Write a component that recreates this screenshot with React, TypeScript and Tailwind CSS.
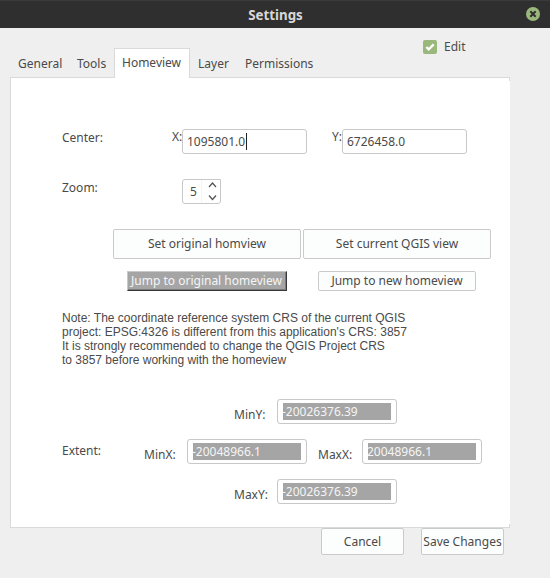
import type { ReactNode } from "react";

function Field({ value, caret = false }: { value: string; caret?: boolean }) {
  return (
    <div className="flex h-[25px] w-[125px] items-start rounded-[3px] border border-[#c8c8c8] bg-white pt-[3px] pl-1">
      <span className="whitespace-pre">{value}</span>
      {caret && <span className="ml-px h-[17px] w-px bg-[#202020]" />}
    </div>
  );
}

function ExtentField({ value }: { value: string }) {
  return (
    <div className="h-[25px] w-[120px] shrink-0 rounded-[3px] border border-[#c8c8c8] bg-white px-[5px] pt-[3px]">
      <div className="h-[17px] overflow-hidden bg-[#a5a5a5] text-[#f5f5f5]">
        <span className="-ml-px block">{value}</span>
      </div>
    </div>
  );
}

function Button({ children, className }: { children: ReactNode; className: string }) {
  return (
    <button className={`flex shrink-0 justify-center rounded-[2px] border border-[#cacaca] bg-[#fcfefd] whitespace-nowrap ${className}`}>
      {children}
    </button>
  );
}

export default function App() {
  return (
    <div className="flex h-[578px] w-[550px] flex-col overflow-hidden bg-[#efefef] font-['Noto_Sans',sans-serif] text-[12px] leading-[17px] text-[#4a4a4a]">
      <header className="flex h-7 shrink-0 items-start border-t border-[#3a3a3a] bg-[#2f2f2f]">
        <h1 className="ml-[25px] flex-1 pt-[5px] text-center text-[13.3px] leading-[18px] font-bold text-[#d8d8d8]">Settings</h1>
        <svg className="mt-1.5 mr-2.5 h-[14px] w-[14px]" viewBox="0 0 14 14">
          <circle cx="7" cy="7" r="7" fill="#9ab87c" />
          <path d="M4.3 4.3l5.400 5.400M9.700 4.300l-5.400 5.400" stroke="#2f2f2f" strokeWidth="2" />
        </svg>
      </header>

      <div className="flex h-[50px] shrink-0 items-end">
        <nav className="-mb-px flex h-[31px] flex-1 items-start pl-[18px]">
          <span className="mt-[7px] w-[59px]">General</span>
          <span className="mt-[7px] w-[37px]">Tools</span>
          <span className="z-10 h-[30px] w-[76px] border border-b-0 border-[#dadada] bg-white pt-[5px] pl-[7px]">Homeview</span>
          <span className="mt-[7px] ml-2 w-[47px]">Layer</span>
          <span className="mt-[7px]">Permissions</span>
        </nav>
        <div className="flex w-[127px] items-start self-start pt-[10px]">
          <svg className="mt-0.5 h-[14px] w-[14px]" viewBox="0 0 14 14">
            <rect width="14" height="14" rx="2" fill="#9ab87c" />
            <path d="M3.3 7l2.4 2.4 5-5" fill="none" stroke="#fff" strokeWidth="2.4" />
          </svg>
          <span className="ml-[7px]">Edit</span>
        </div>
      </div>

      <main className="relative -mt-px ml-[10px] h-[451px] w-[500px] shrink-0 border-y border-l border-[#dadada] bg-white">
        <span className="absolute top-0 right-0 h-[3px] w-px bg-[#dadada]" />
        <span className="absolute right-0 bottom-0 h-[3px] w-px bg-[#dadada]" />
        <div className="mt-[51px] flex h-[25px] items-start">
          <span className="ml-[51px] w-[110px]">Center:</span>
          <span className="-mt-px w-[10px] whitespace-nowrap">X:</span>
          <Field value="1095801.0" caret />
          <span className="-mt-px ml-[25px] w-[10px] whitespace-nowrap">Y:</span>
          <Field value="6726458.0" />
        </div>

        <div className="mt-[25px] flex h-[25px] items-start">
          <span className="ml-[51px] w-[120px]">Zoom:</span>
          <div className="flex h-[25px] w-[39px] rounded-[3px] rounded-tr-none border border-[#c8c8c8]">
            <span className="w-[19px] border-r border-[#f4f4f4] pt-[3px] pl-[7px]">5</span>
            <svg className="h-[23px] w-[18px]" viewBox="0 0 18 23" fill="none" stroke="#505050" strokeWidth="1.2">
              <path d="M7 7l3.5-4L14 7M7 15.500l3.500 4 3.500-4" />
            </svg>
          </div>
        </div>

        <div className="mt-[25px] ml-[102px] flex gap-[2px]">
          <Button className="h-[30px] w-[188px] pt-[5px]">Set original homview</Button>
          <Button className="h-[30px] w-[188px] pt-[5px]">Set current QGIS view</Button>
        </div>
        <div className="mt-[12px] ml-[116px] flex gap-[31px]">
          <button className="flex h-[20px] w-[160px] justify-center border border-t-[#c8c8c8] border-r-[#383838] border-b-[#383838] border-l-[#c8c8c8] bg-[#a5a5a5] pr-px whitespace-nowrap text-[#f5f5f5] shadow-[inset_-1px_-1px_0_#7c7c7c]">
            Jump to original homeview
          </button>
          <Button className="h-[20px] w-[158px]">Jump to new homeview</Button>
        </div>

        <p className="mt-[20px] ml-[51px] h-[56px] font-['Liberation_Sans',sans-serif] text-[12px] leading-[14px] whitespace-nowrap">
          Note: The coordinate reference system CRS of the current QGIS<br />
          project: EPSG:4326 is different from this application's CRS: 3857<br />
          It is strongly recommended to change the QGIS Project CRS<br />
          to 3857 before working with the homeview
        </p>

        <div className="mt-[32px] flex h-[25px] items-start">
          <span className="mt-[7px] ml-[223px] w-[43px]">MinY:</span>
          <ExtentField value="-20026376.39" />
        </div>
        <div className="mt-[15px] flex h-[25px] items-start">
          <span className="mt-[3px] ml-[51px] w-[82px]">Extent:</span>
          <span className="mt-[7px] w-[43px]">MinX:</span>
          <ExtentField value="-20048966.1" />
          <span className="mt-[7px] ml-[11px] w-[44px]">MaxX:</span>
          <ExtentField value="20048966.1" />
        </div>
        <div className="mt-[15px] flex h-[25px] items-start">
          <span className="mt-[7px] ml-[223px] w-[43px]">MaxY:</span>
          <ExtentField value="-20026376.39" />
        </div>
      </main>

      <footer className="flex gap-[17px] pl-[321px]">
        <Button className="h-[27px] w-[83px] pt-[4px]">Cancel</Button>
        <Button className="h-[27px] w-[83px] pt-[4px]">Save Changes</Button>
      </footer>
    </div>
  );
}
